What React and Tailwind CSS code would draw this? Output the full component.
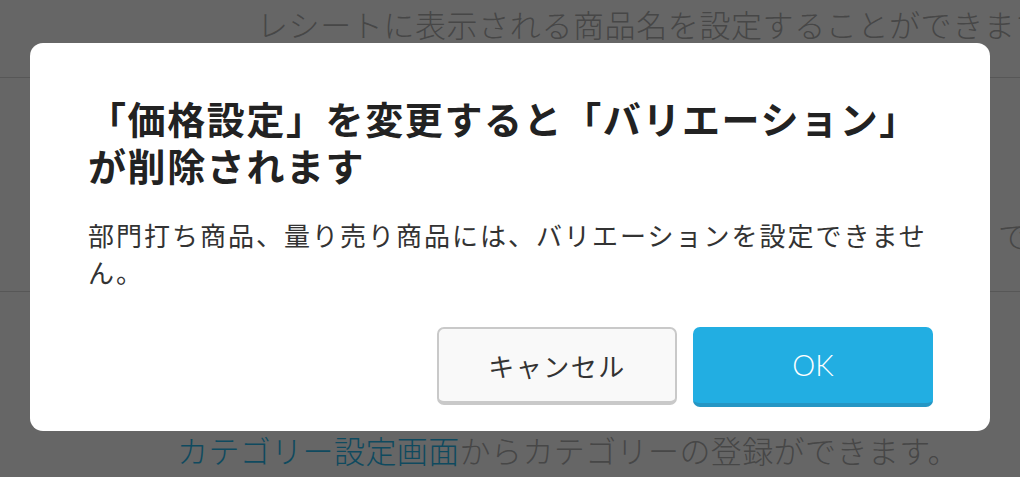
import React from "react";

const jp = { fontFamily: '"Noto Sans CJK JP", "Noto Sans", sans-serif' };

export default function App() {
  return (
    <div className="relative w-[1020px] h-[477px] overflow-hidden bg-[#666666]" style={jp}>
      {/* background page (dimmed) */}
      <div className="flex flex-col">
        <div className="h-[78px] border-b border-[#575757] pl-[257px] pt-[4px]">
          <div className="text-[31px] leading-[40px] tracking-[0.6px] font-light text-[#474747] whitespace-nowrap">
            レシートに表示される商品名を設定することができます。
          </div>
        </div>
        <div className="h-[214px] border-b border-[#575757] pl-[998px] pt-[137px]">
          <div className="text-[31px] leading-[40px] font-light text-[#474747] whitespace-nowrap">で</div>
        </div>
        <div className="pl-[177px] pt-[138px]">
          <div className="text-[31px] leading-[40px] tracking-[0.4px] font-light text-[#474747] whitespace-nowrap">
            <span className="text-[#0f4a5f]">カテゴリー設定画面</span>からカテゴリーの登録ができます。
          </div>
        </div>
      </div>

      {/* modal */}
      <div className="absolute left-[30px] top-[43px] w-[960px] h-[388px] bg-white rounded-[13px] pt-[51px] pl-[58px] pr-[57px] pb-[24px] flex flex-col">
        <h1 className="mr-[-12px] text-[38px] leading-[47px] font-bold tracking-[1.6px] text-[#222222]">
          「価格設定」を変更すると「バリエーション」が削除されます
        </h1>
        <p className="mr-[-12px] mt-[28px] text-[26px] leading-[37px] tracking-[2px] text-[#333333]">
          部門打ち商品、量り売り商品には、バリエーションを設定できません。
        </p>
        <div className="mt-[37px] flex justify-end gap-[16px]">
          <button className="w-[240px] h-[78px] rounded-[7px] border-2 border-b-[4px] border-[#c9c9c9] bg-[#f9f9f9] text-[26px] tracking-[1.5px] text-[#333333] flex items-center justify-center">
            キャンセル
          </button>
          <button
            className="w-[240px] h-[80px] rounded-[7px] border-b-[4px] border-[#2596c4] bg-[#22aee2] text-[29px] font-light text-white flex items-center justify-center"
            style={{ fontFamily: 'Lato, "Noto Sans", sans-serif' }}
          >
            OK
          </button>
        </div>
      </div>
    </div>
  );
}
